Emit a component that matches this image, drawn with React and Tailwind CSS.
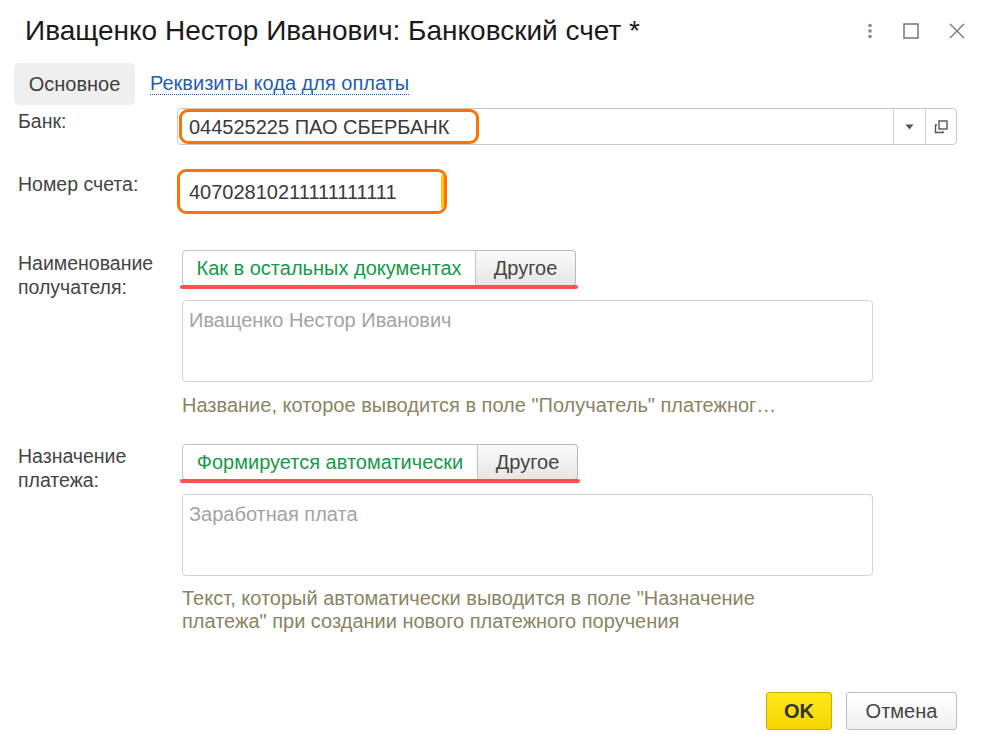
import React from "react";

function Toggle({ first, firstW, secondW }) {
  return (
    <div className="relative flex h-[36px] w-fit">
      <div
        className="flex items-center justify-center rounded-l-[4px] border border-[#c4c4c4] bg-white text-[#16994a]"
        style={{ width: firstW }}
      >
        {first}
      </div>
      <div
        className="flex items-center justify-center rounded-r-[4px] border border-l-0 border-[#b8b8b8] bg-gradient-to-b from-[#fbfbfb] to-[#e6e6e6] text-[#444]"
        style={{ width: secondW }}
      >
        Другое
      </div>
      <div className="absolute left-[-2px] right-[-2px] bottom-[-3px] h-[4px] rounded-full bg-[#ff4f4f]" />
    </div>
  );
}

export default function App() {
  return (
    <div
      className="w-[985px] h-[750px] bg-white text-[20px] text-[#444] overflow-hidden"
      style={{ fontFamily: '"Liberation Sans", Arial, sans-serif' }}
    >
      {/* Header */}
      <div className="flex h-[62px] items-center pl-[25px] pr-[20px]">
        <div className="flex-1 text-[28px] text-[#1a1a1a]">
          Иващенко Нестор Иванович: Банковский счет *
        </div>
        <div className="flex items-center gap-[30px] text-[#777]">
          <svg width="6" height="16" viewBox="0 0 6 16">
            <circle cx="3" cy="2.5" r="1.8" fill="#888" />
            <circle cx="3" cy="8" r="1.8" fill="#888" />
            <circle cx="3" cy="13.5" r="1.8" fill="#888" />
          </svg>
          <svg width="16" height="16" viewBox="0 0 16 16">
            <rect x="1" y="1" width="14" height="14" fill="none" stroke="#777" strokeWidth="1.5" />
          </svg>
          <svg width="16" height="16" viewBox="0 0 16 16">
            <path d="M1 1 L15 15 M15 1 L1 15" stroke="#777" strokeWidth="1.4" fill="none" />
          </svg>
        </div>
      </div>

      {/* Tabs */}
      <div className="flex items-center h-[43px] pl-[14px]">
        <div className="flex h-[42px] w-[121px] items-center justify-center rounded-[5px] bg-[#efefef] text-[#3d3d3d]">
          Основное
        </div>
        <div className="ml-[15px] text-[#1f5db3] border-b border-dotted border-[#1f5db3] leading-[22px]">
          Реквизиты кода для оплаты
        </div>
      </div>

      {/* Bank */}
      <div className="flex mt-[3px] pl-[18px]">
        <div className="w-[159px] pt-[2px] leading-[22px] text-[19.5px]">Банк:</div>
        <div className="relative flex h-[37px] w-[780px] items-center rounded-[4px] border border-[#c8c8c8]">
          <div className="flex-1 pl-[11px] text-[#3a3a3a]">044525225 ПАО СБЕРБАНК</div>
          <div className="flex h-full w-[32px] items-center justify-center border-l border-[#cfcfcf]">
            <svg width="9" height="6" viewBox="0 0 9 6">
              <path d="M0.5 0.5 L8.5 0.5 L4.5 5.5 Z" fill="#555" />
            </svg>
          </div>
          <div className="flex h-full w-[31px] items-center justify-center border-l border-[#cfcfcf]">
            <svg width="14" height="14" viewBox="0 0 14 14">
              <rect x="5" y="1" width="8" height="8" fill="none" stroke="#555" strokeWidth="1.4" />
              <path d="M3 5 H1.5 V12.5 H9 V11" fill="none" stroke="#555" strokeWidth="1.4" />
            </svg>
          </div>
          <div className="absolute left-[1px] top-[0px] h-[35px] w-[300px] rounded-[9px] border-[3px] border-[#ff7300]" />
        </div>
      </div>

      {/* Account number */}
      <div className="flex mt-[24px] pl-[18px]">
        <div className="w-[159px] pt-[4px] leading-[22px] text-[19.5px]">Номер счета:</div>
        <div className="relative h-[45px] w-[270px]">
          <div className="absolute inset-0 flex items-center rounded-[9px] border-[3px] border-[#ff7300] pl-[9px] text-[#3a3a3a]">
            40702810211111111111
          </div>
          <div className="absolute top-[6px] bottom-[6px] right-[3px] w-[3px] bg-[#ffc21a]" />
        </div>
      </div>

      {/* Recipient name */}
      <div className="flex mt-[36px] pl-[18px]">
        <div className="w-[164px] leading-[24px] pt-[1px] text-[19.5px]">
          Наименование
          <br />
          получателя:
        </div>
        <div className="flex flex-col">
          <Toggle first="Как в остальных документах" firstW={294} secondW={100} />
          <div className="mt-[14px] h-[82px] w-[691px] rounded-[4px] border border-[#d2d2d2] px-[6px] pt-[4px] text-[#a3a3a3]">
            Иващенко Нестор Иванович
          </div>
          <div className="mt-[12px] text-[#8a8462] leading-[23px]">
            Название, которое выводится в поле "Получатель" платежног…
          </div>
        </div>
      </div>

      {/* Payment purpose */}
      <div className="flex mt-[27px] pl-[18px]">
        <div className="w-[164px] leading-[24px] pt-[0px] text-[19.5px]">
          Назначение
          <br />
          платежа:
        </div>
        <div className="flex flex-col">
          <Toggle first="Формируется автоматически" firstW={296} secondW={100} />
          <div className="mt-[14px] h-[82px] w-[691px] rounded-[4px] border border-[#d2d2d2] px-[6px] pt-[4px] text-[#a3a3a3]">
            Заработная плата
          </div>
          <div className="mt-[11px] text-[#8a8462] leading-[23px]">
            Текст, который автоматически выводится в поле "Назначение
            <br />
            платежа" при создании нового платежного поручения
          </div>
        </div>
      </div>

      {/* Footer buttons */}
      <div className="mt-[59px] flex justify-end gap-[14px] pr-[28px]">
        <div className="flex h-[38px] w-[66px] items-center justify-center rounded-[3px] border border-[#c9ad00] bg-gradient-to-b from-[#ffe71a] to-[#f5d500] font-bold text-[#333]">
          OK
        </div>
        <div className="flex h-[38px] w-[111px] items-center justify-center rounded-[3px] border border-[#bdbdbd] bg-gradient-to-b from-white to-[#f1f1f1] text-[#444]">
          Отмена
        </div>
      </div>
    </div>
  );
}
